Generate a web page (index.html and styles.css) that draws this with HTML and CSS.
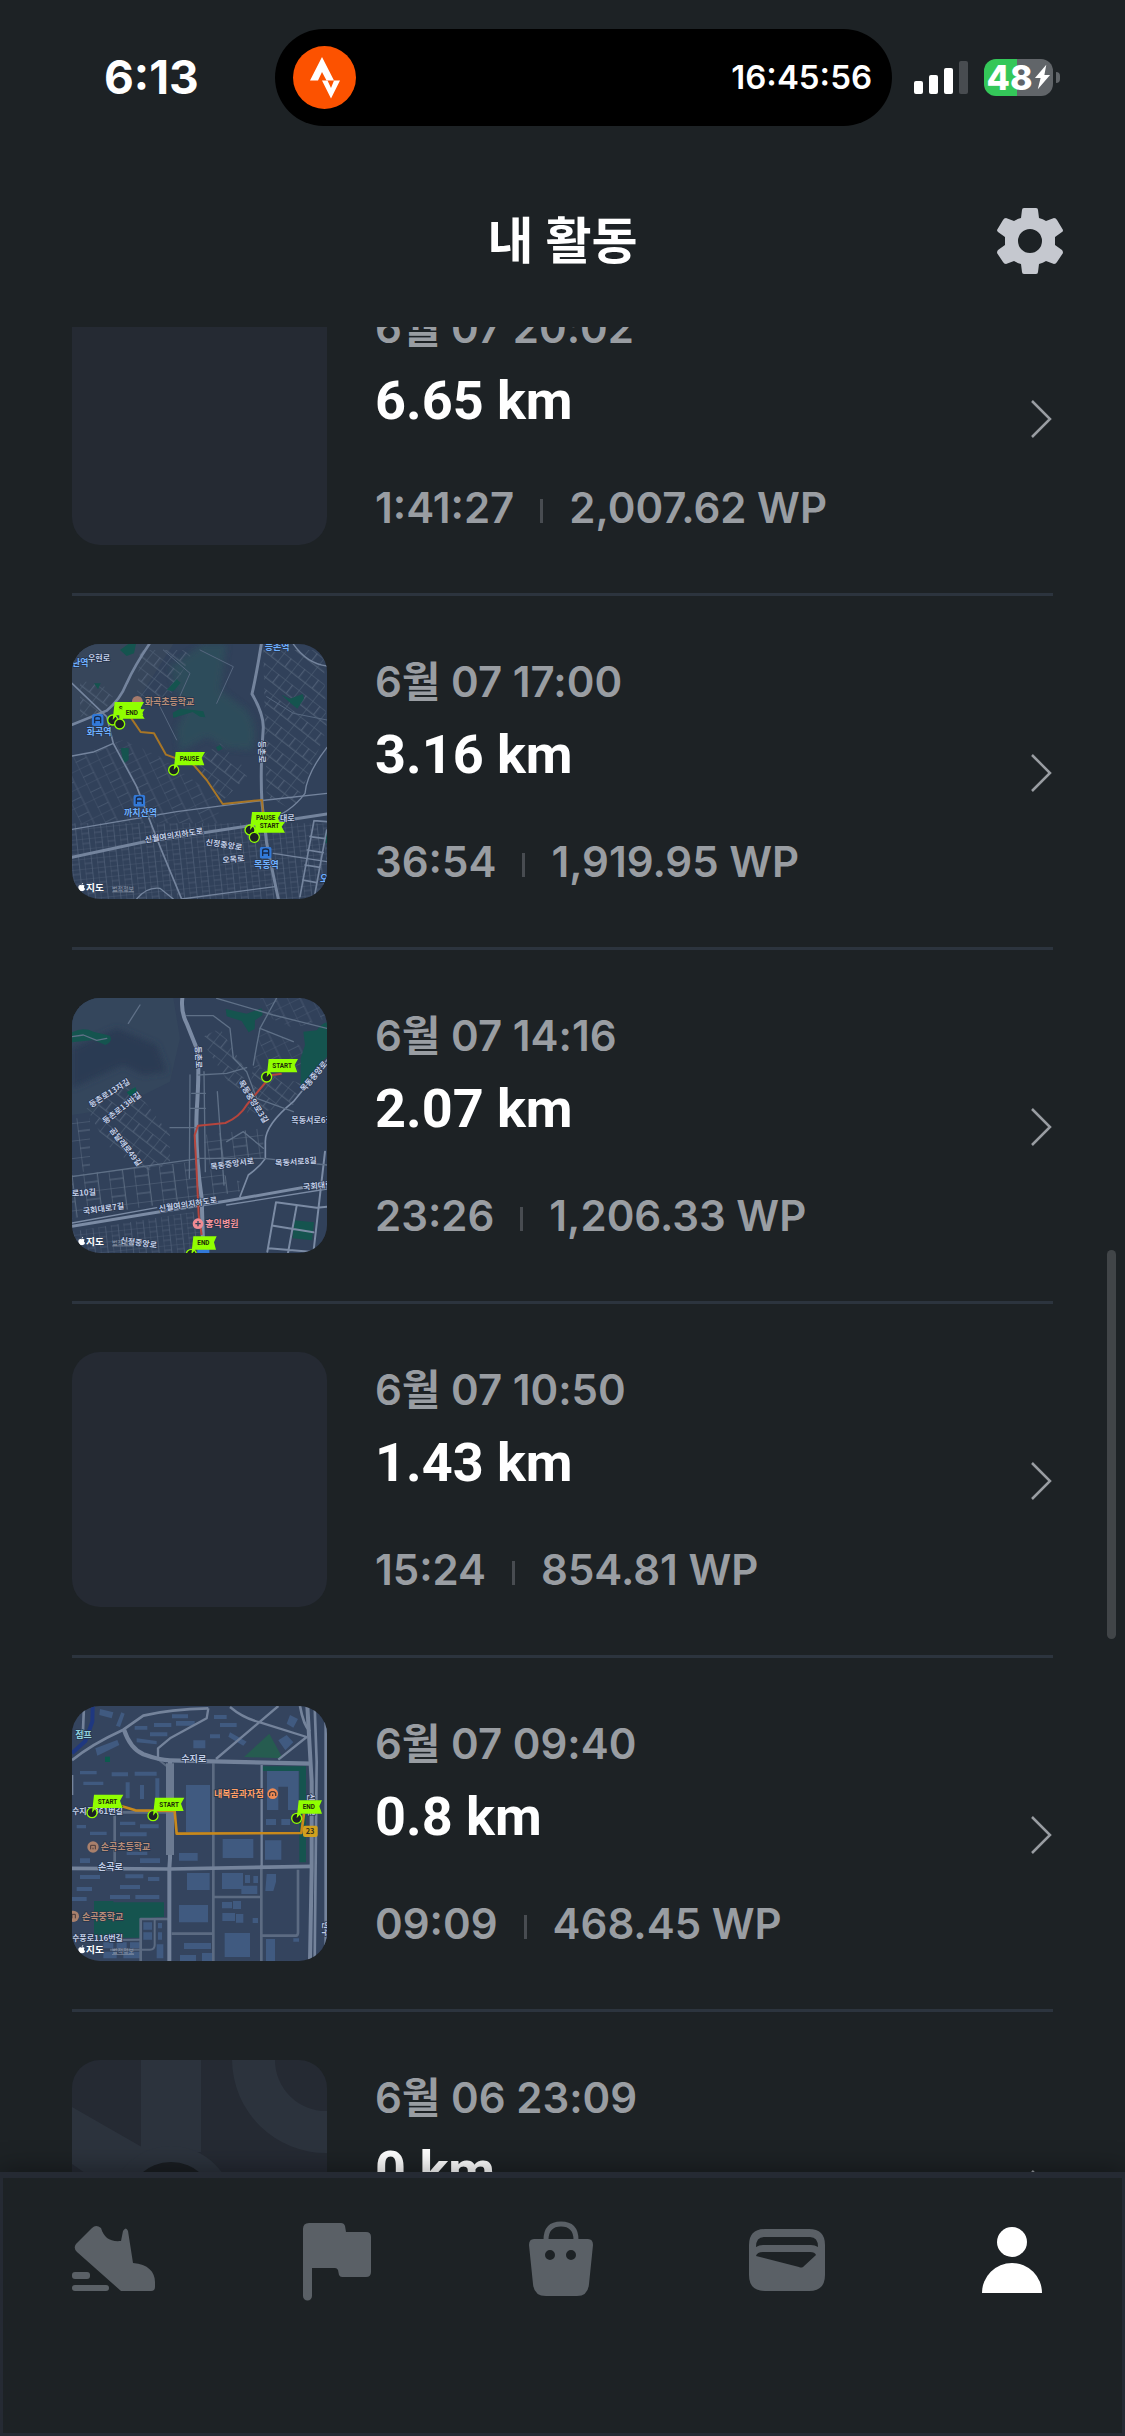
FILE: index.html
```html
<!DOCTYPE html>
<html lang="ko">
<head>
<title>내 활동</title>
<meta charset="utf-8"/>
<meta name="viewport" content="width=device-width, initial-scale=1">
<link rel="stylesheet" href="styles.css">
</head>
<body>

<!-- shared symbols -->
<svg class="defs" width="0" height="0" aria-hidden="true">
  <defs>
    <filter id="soft"><feGaussianBlur stdDeviation="10"/></filter>
    <pattern id="grid-a" width="38" height="30" patternUnits="userSpaceOnUse" patternTransform="rotate(-6)">
      <path d="M0 0H38M0 15H22M0 0V30M22 0V30" fill="none" stroke="#53637a" stroke-width="2"/>
    </pattern>
    <pattern id="grid-b" width="66" height="50" patternUnits="userSpaceOnUse" patternTransform="rotate(-26)">
      <path d="M0 0H66M0 28H36M0 0V50M36 0V50" fill="none" stroke="#4f6076" stroke-width="2"/>
    </pattern>
    <pattern id="grid-c" width="52" height="60" patternUnits="userSpaceOnUse" patternTransform="rotate(38)">
      <path d="M0 0H52M0 0V60M28 0V32M0 32H52" fill="none" stroke="#536379" stroke-width="3"/>
    </pattern>
    <pattern id="grid-d" width="76" height="52" patternUnits="userSpaceOnUse" patternTransform="rotate(-7)">
      <path d="M0 0H76M0 26H42M0 0V52M42 0V52" fill="none" stroke="#5c6c81" stroke-width="3"/>
    </pattern>
    <symbol id="pin" viewBox="-20 -60 120 80" overflow="visible">
      <circle r="15" fill="#1d2225" stroke="#90ff00" stroke-width="4"/>
      <path d="M0 0L6 -54H94L84 -36L92 -14H12Z" fill="#90ff00"/>
    </symbol>
    <symbol id="station" viewBox="0 0 36 36">
      <rect width="36" height="36" rx="8" fill="#3279d8"/>
      <path d="M9 28V12Q9 7 18 7T27 12V28M11 19H25" fill="none" stroke="#16294a" stroke-width="4"/>
    </symbol>
    <symbol id="apple" viewBox="0 0 22 26">
      <path d="M11 8C7 5 1 7 1 14C1 20 5 25 8 25C10 25 12 25 14 25C18 25 21 20 21 18C17 16 17 11 20 9C17 6 14 7 11 8ZM11 6Q11 1 16 0Q16 5 11 6Z" fill="#fff"/>
    </symbol>
    <symbol id="chevron" viewBox="0 0 22 40">
      <path d="M1 3L19 21L1 39" fill="none" stroke="#999da2" stroke-width="2.500"/>
    </symbol>
  </defs>
</svg>

<div class="app">
  <div class="status">
    <span class="clock">6:13</span>
    <div class="island">
      <svg class="strava" viewBox="0 0 63 63" role="img" aria-label="Strava">
        <circle cx="31.5" cy="31.5" r="31.5" fill="#fc5200"/>
        <path d="M29 11L41 34.500H33.500L29 26L25 34.500H17Z" fill="#fff"/>
        <path d="M29 34.500H34.500L38 42L41 34.500H47L38 52.500Z" fill="#fff"/>
      </svg>
      <span>16:45:56</span>
    </div>
    <div class="signal"><i></i><i></i><i></i><i></i></div>
    <div class="battery">
      <span>48</span>
      <svg viewBox="0 0 18 26"><path d="M13 0L1 14H7L4 26L17 11H11Z" fill="#fff"/></svg>
    </div>
  </div>

  <header class="header">
    <h1>내 활동</h1>
    <button class="settings" type="button" aria-label="설정">
      <svg viewBox="-33 -33 66 66">
        <path fill="#c5c8cf" fill-rule="evenodd" d="M-6 -33H6Q8 -33 8 -31L9 -23Q13 -22 16 -20L24 -23Q26 -23 27 -21L33 -11Q33 -9 32 -9L25 -4V4L32 9Q33 10 33 12L27 21Q26 23 24 23L16 20Q13 22 9 23L8 31Q8 33 6 33H-6Q-8 33 -8 31L-9 23Q-13 22 -16 20L-24 23Q-26 23 -27 21L-33 12Q-33 10 -32 9L-25 4V-4L-32 -9Q-33 -10 -33 -11L-27 -21Q-26 -23 -24 -23L-16 -20Q-13 -22 -9 -23L-8 -31Q-8 -33 -6 -33ZM0 -12A12 12 0 1 0 0 12A12 12 0 1 0 0 -12Z"/>
      </svg>
    </button>
  </header>

  <main class="scroller">
    <div class="list">
      <a class="row" href="#">
        <div class="thumb"></div>
        <div class="info">
          <div class="date">6월 07 20:02</div>
          <div class="distance">6.65 km</div>
          <div class="meta"><span>1:41:27</span><span>2,007.62 WP</span></div>
        </div>
        <svg class="chevron"><use href="#chevron"/></svg>
      </a>

      <a class="row" href="#">
        <svg class="thumb map" viewBox="36 42 765 765">
          <rect x="36" y="42" width="765" height="765" fill="#31415a"/>
          <path d="M36 42H340L240 200L36 280Z" fill="#37465b"/>
          <path d="M430 42H500L480 180L560 240Q600 300 575 360L500 355L440 320L360 365L350 300L380 230L350 190L330 110Z" fill="#2f4f5b" opacity=".8" filter="url(#soft)"/>
          <path d="M36 580H801V807H36Z" fill="url(#grid-a)"/>
          <path d="M36 380L190 330L300 380L470 500L480 580H36Z" fill="url(#grid-b)"/>
          <path d="M240 60L400 60L330 200L230 200ZM400 400L480 340L570 430L490 510ZM610 60H790L800 300L700 540L620 500ZM60 150L170 180L130 250L60 260Z" fill="url(#grid-c)"/>
          <g fill="#15544f">
            <path d="M180 60L205 42H228L222 70L200 78ZM320 180L350 148L362 158L340 184ZM338 248L360 236L400 240L430 244L436 262L420 260L398 246L340 264ZM664 194L690 206L728 192L732 206L712 236L692 220ZM182 354H206V390L190 402L186 376ZM468 352L480 345L488 356L474 363ZM102 160H122L114 178ZM796 606H801V640H796Z"/>
          </g>
          <g fill="none" stroke="#74849d" stroke-linecap="round">
            <path d="M268 42Q225 105 200 160Q180 210 140 242L36 284" stroke-width="8"/>
            <path d="M604 42Q590 130 576 192Q610 250 610 292Q600 420 606 520L620 640L655 807" stroke-width="9"/>
            <path d="M36 682L250 636L801 552" stroke-width="9"/>
            <path d="M36 160L140 260L160 340L230 470L300 650L365 807" stroke-width="5"/>
            <path d="M36 378L100 366L160 340M700 42Q740 100 801 108M801 352Q740 430 735 490Q690 550 620 570" stroke-width="4"/>
            <path d="M36 598L350 545L620 510L801 490M365 807L645 770M230 807Q260 770 300 775L340 807M640 670L801 695" stroke-width="4"/>
            <path d="M762 572L800 575M762 572L720 800M800 600L765 790M750 620L796 626M742 660L790 668M735 705L780 712M728 750L770 758" stroke-width="5"/>
            <path d="M310 60L390 130L350 220M420 60L520 110L470 220M620 200L700 250L801 270M300 230L350 330" stroke="#56677f" stroke-width="3"/>
          </g>
          <path d="M212 262L242 306L282 310L318 374L400 404L440 450L488 522L606 510L610 560" fill="none" stroke="#a87626" stroke-width="6" stroke-linejoin="round"/>
          <g class="label blue">
            <text x="36" y="108">난역</text><text x="614" y="60">등촌역</text>
            <text x="80" y="315">화곡역</text><text x="192" y="557">까치산역</text><text x="582" y="713">목동역</text><text x="780" y="755">오</text>
          </g>
          <g class="label">
            <text class="small" x="84" y="94">우현로</text>
            <text class="small" transform="translate(256 638) rotate(-9)">신월여의지하도로</text>
            <text class="small" transform="translate(436 644) rotate(9)">신정중앙로</text>
            <text class="small" transform="translate(488 700) rotate(-6)">오목로</text>
            <text class="small" x="660" y="572">대로</text>
            <text class="small" transform="translate(598 332) rotate(90)">등촌로</text>
          </g>
          <circle cx="232" cy="214" r="16" fill="#a57a6b"/>
          <text class="label brown" x="254" y="224">화곡초등학교</text>
          <use href="#station" x="95" y="252" width="36" height="36"/>
          <use href="#station" x="220" y="494" width="36" height="36"/>
          <use href="#station" x="599" y="650" width="36" height="36"/>
          <g class="pins">
            <g transform="translate(158 270)"><use href="#pin" x="-20" y="-60" width="120" height="80"/><text x="18" y="-26">S</text></g>
            <g transform="translate(179 282)"><path d="M0 0L-2 -44H75L66 -30L75 -16H10Z" fill="#90ff00"/><circle r="15" fill="#1d2225" stroke="#90ff00" stroke-width="4"/><text x="18" y="-26">END</text></g>
            <g transform="translate(341 420)"><use href="#pin" x="-20" y="-60" width="120" height="80"/><text x="18" y="-27">PAUSE</text></g>
            <g transform="translate(570 600)"><use href="#pin" x="-20" y="-60" width="120" height="80"/><text x="18" y="-30">PAUSE</text></g>
            <g transform="translate(583 622)"><path d="M0 0L4 -46H92L82 -32L92 -14H12Z" fill="#90ff00"/><circle r="15" fill="#1d2225" stroke="#90ff00" stroke-width="4"/><text x="16" y="-27">START</text></g>
          </g>
          <use href="#apple" x="54" y="758" width="22" height="26"/>
          <text class="brand" x="78" y="783">지도</text><text class="legal" x="156" y="782">법적정보</text>
        </svg>
        <div class="info">
          <div class="date">6월 07 17:00</div>
          <div class="distance">3.16 km</div>
          <div class="meta"><span>36:54</span><span>1,919.95 WP</span></div>
        </div>
        <svg class="chevron"><use href="#chevron"/></svg>
      </a>

      <a class="row" href="#">
        <svg class="thumb map" viewBox="36 39 765 765">
          <rect x="36" y="39" width="765" height="765" fill="#31415a"/>
          <path d="M36 39H340L360 160L330 290L250 330L170 310L100 380L36 390Z" fill="#34465c"/>
          <path d="M36 190L170 130L290 180L320 260L250 270L190 240L36 310Z" fill="#2b3b53" filter="url(#soft)"/>
          <path d="M80 370L210 290L330 450V540L250 560L140 480ZM480 130L560 260L530 330L420 160ZM580 240L730 300L700 360L560 390Z" fill="url(#grid-c)"/>
          <path d="M36 570L400 530L540 590L540 620L36 700Z" fill="url(#grid-d)"/>
          <path d="M36 740L400 680L440 804H36Z" fill="url(#grid-a)"/>
          <path d="M600 130L740 190V260L580 250ZM600 39H801V100L700 130L610 90Z" fill="url(#grid-b)"/>
          <path d="M36 400L90 400V560H36ZM430 450L610 430V520L440 540Z" fill="url(#grid-d)"/>
          <g fill="#15544f">
            <path d="M36 142Q70 125 100 140L150 152Q160 170 136 180L100 165L36 172ZM497 72L560 86L605 70L608 90L585 106L584 132L566 142L545 108L500 94ZM730 140L770 136Q785 115 801 112V215L770 250L745 290L722 300V220L735 180ZM702 706L762 712L756 766L698 760Z"/>
            <path d="M200 322L226 306L232 322L212 336Z" fill="#0c5b4e"/>
          </g>
          <g fill="none" stroke="#7b8ba4" stroke-linecap="round" stroke-linejoin="round">
            <path d="M367 39Q362 80 380 115L410 190Q420 230 410 380Q405 500 425 640L430 804" stroke-width="12"/>
            <path d="M36 724L300 680L500 648L801 595" stroke-width="9"/>
            <path d="M36 714L290 668M500 660L801 612" stroke-width="4"/>
            <path d="M801 225L700 350Q615 420 616 470V520Q600 545 565 570L540 635" stroke-width="5"/>
            <path d="M648 652L770 668L801 665M648 652L622 800M710 662L684 804M795 500L760 804M640 722L760 742M626 790L750 800" stroke-width="6"/>
            <g stroke="#5f7087" stroke-width="4">
              <path d="M380 92H460L510 130L520 220L560 260L590 340L700 380M240 60L205 115M415 270L500 265L560 248M390 270L388 580M432 260L436 560M330 428H410M472 320L492 600M395 325H436M390 370H436M600 130Q590 180 580 240M470 40L640 90L801 130M36 575L420 520L610 520L801 540"/>
              <path d="M650 39L600 130L700 170M500 470L550 440L610 490M36 155L70 150L110 166L140 160"/>
            </g>
          </g>
          <path d="M425 750L416 690L410 560L404 450L414 422L496 414Q540 395 560 360L600 312L636 270L665 266" fill="none" stroke="#b5453d" stroke-width="6" stroke-linejoin="round"/>
          <g class="label">
            <text class="small" transform="translate(406 184) rotate(88)">등촌로</text>
            <text class="small" transform="translate(94 368) rotate(-32)">등촌로13자길</text>
            <text class="small" transform="translate(136 418) rotate(-38)">등촌로13바길</text>
            <text class="small" transform="translate(148 436) rotate(52)">곰달래로49길</text>
            <text class="small" transform="translate(534 292) rotate(58)">목동중앙로3길</text>
            <text class="small" transform="translate(732 322) rotate(-50)">목동중앙로</text>
            <text class="small" x="694" y="414">목동서로6길</text>
            <text class="small" transform="translate(452 554) rotate(-8)">목동중앙서로</text>
            <text class="small" transform="translate(646 543) rotate(-4)">목동서로8길</text>
            <text class="small" transform="translate(730 615) rotate(-6)">국회대로</text>
            <text class="small" transform="translate(36 634) rotate(-4)">로10길</text>
            <text class="small" transform="translate(70 688) rotate(-8)">국회대로7길</text>
            <text class="small" transform="translate(298 680) rotate(-9)">신월여의지하도로</text>
            <text class="small" transform="translate(180 774) rotate(8)">신정중앙로</text>
          </g>
          <circle cx="414" cy="716" r="16" fill="#f08a93"/><path d="M406 716H422M414 708V724" stroke="#31415a" stroke-width="4"/>
          <text class="label pink" x="436" y="726">홍익병원</text>
          <rect x="412" y="780" width="36" height="36" fill="#3279d8"/>
          <g class="pins">
            <g transform="translate(620 276)"><use href="#pin" x="-20" y="-60" width="120" height="80"/><text x="17" y="-27">START</text></g>
            <g transform="translate(394 808)"><circle r="15" fill="#1d2225" stroke="#90ff00" stroke-width="4"/><path d="M0 0L6 -54H76L68 -36L74 -14H12Z" fill="#90ff00"/><text x="18" y="-28">END</text></g>
          </g>
          <use href="#apple" x="54" y="755" width="22" height="26"/>
          <text class="brand" x="78" y="780">지도</text><text class="legal" x="156" y="779">법적정보</text>
        </svg>
        <div class="info">
          <div class="date">6월 07 14:16</div>
          <div class="distance">2.07 km</div>
          <div class="meta"><span>23:26</span><span>1,206.33 WP</span></div>
        </div>
        <svg class="chevron"><use href="#chevron"/></svg>
      </a>

      <a class="row" href="#">
        <div class="thumb"></div>
        <div class="info">
          <div class="date">6월 07 10:50</div>
          <div class="distance">1.43 km</div>
          <div class="meta"><span>15:24</span><span>854.81 WP</span></div>
        </div>
        <svg class="chevron"><use href="#chevron"/></svg>
      </a>

      <a class="row" href="#">
        <svg class="thumb map" viewBox="36 33 765 765">
          <rect x="36" y="33" width="765" height="765" fill="#34445e"/>
          <g fill="#15544f">
            <path d="M102 618H160V622H312V666Q280 665 240 676V728H102ZM606 214H738V502H718V228H606Z"/>
            <path d="M552 186L628 116L668 190Z" fill="#265c50"/>
            <rect x="135" y="185" width="15" height="16" fill="#0c5b4e"/>
          </g>
          <path d="M98 33L97 80L76 138L36 175" fill="none" stroke="#1f3880" stroke-width="12"/>
          <!-- buildings -->
          <g fill="#405a80">
            <path d="M378 270H450V412H378ZM621 228H716V345H684V275H655V345H621ZM488 432H580V489H488ZM615 436H664V494H615ZM357 474H413V497H357ZM381 534H449V585H381ZM486 534H549V582H486ZM357 630H444V682H357ZM494 714H570V786H494ZM372 744H453V762H372ZM618 732H645V798H618ZM360 780H408V798H360ZM426 774H460V798H426Z"/>
            <path d="M555 540H570V564H555ZM580 543H594V564H580ZM544 572H592V597H544ZM620 537H648V560L640 588H616ZM486 621H516V640H486ZM519 618H543V642H519ZM487 654H525V678H487ZM528 657H550V683H528ZM578 669H594V684H578ZM618 372H648V390H618ZM664 372H690V390H664ZM700 730H717V740H700Z"/>
            <path d="M106 160L172 135L178 150L112 182ZM120 42L160 52L155 70L118 60ZM184 52L194 56L180 96L168 92ZM224 93H262V104H224ZM282 84H334V96H282ZM270 112H322V124H270ZM348 78H404V92H348ZM336 58H384V70H336ZM230 130L290 138V148L230 142ZM400 136H436V160H400ZM462 60H500V72H462ZM480 84H530V96H480ZM450 118H480V130H450ZM510 112L560 140L550 152L505 125ZM655 136L680 120L700 142L676 166ZM690 60L714 72L700 98L680 86Z"/>
            <path d="M60 228H110V238H60ZM70 260H130V270H70ZM155 232H204V244H155ZM224 230H290V242H224ZM197 262H209V310H197ZM286 250H298V320H286ZM240 270H252V312H240ZM50 390H78V400H50ZM90 410H140V420H90ZM180 380H226V390H180ZM240 388H296V400H240ZM180 412H260V424H180ZM200 470H262V480H200ZM240 490H300V504H240ZM60 490H90V504H60ZM196 538H250V550H196ZM264 546H298V558H264ZM60 540H120V552H60ZM50 576H96V588H50ZM180 570H240V582H180ZM150 600H210V612H150ZM226 600H298V612H226ZM36 606H80V618H36Z"/>
            <path d="M250 682H276V704H250ZM250 712H276V734H250ZM294 684H306V700H294ZM294 712H306V734H294ZM130 742H160V760H130ZM170 742H200V760H170ZM210 742H240V760H210ZM130 770H170V790H130ZM190 770H240V790H190ZM290 748H310V790H290Z"/>
          </g>
          <g fill="none" stroke="#5c6b82" stroke-linejoin="round">
            <path d="M460 205V798M462 606H604M604 510V798M335 716H460M604 722H708Q714 722 714 712V524M242 798V672H326M164 350V510M150 352H320" stroke-width="8"/>
            <path d="M328 220L290 190M284 672V750Q284 764 270 764H150M180 735L240 734" stroke-width="6"/>
          </g>
          <g fill="none" stroke="#74839b" stroke-linejoin="round">
            <path d="M36 196Q90 150 190 104L250 62Q330 42 445 40M36 240V300M72 33L68 130" stroke-width="8"/>
            <path d="M192 104Q210 160 250 178Q300 196 330 196L756 206" stroke-width="13"/>
            <path d="M445 40L440 70L330 130L294 160V196M468 192L655 33M510 36Q550 70 600 82L740 126L655 194M605 210V514" stroke-width="7"/>
            <path d="M330 196V490L328 520V798" stroke-width="12"/>
            <path d="M330 205V480" stroke-width="24" stroke="#6b7a91"/>
            <path d="M36 520L330 522L756 514" stroke-width="11"/>
            <path d="M742 33L755 260V520L750 798" stroke-width="12"/>
            <path d="M764 33L770 200L764 798M720 33Q730 90 750 110M797 80V798" stroke-width="8"/>
          </g>
          <path d="M186 334L226 346L344 348L350 416L724 414L732 356" fill="none" stroke="#c8891c" stroke-width="8" stroke-linejoin="round"/>
          <g class="label">
            <text x="46" y="128" fill="#8fd0dc">점프</text>
            <text x="364" y="202">수지로</text>
            <text class="small" x="36" y="357">수지로361번길</text>
            <text x="114" y="526">손곡로</text>
            <text class="small" x="36" y="738">수풍로116번길</text>
            <text class="small" transform="translate(744 296) rotate(90)">신수로</text>
            <text class="small" transform="translate(788 680) rotate(90)">만수</text>
          </g>
          <g class="label brown">
            <text x="122" y="466">손곡초등학교</text><text x="66" y="674">손곡중학교</text>
          </g>
          <text class="label orange" x="462" y="306">내복곰과자점</text>
          <circle cx="638" cy="296" r="16" fill="#ee8a53"/><path d="M629 303V294L634 290H642L647 294V303M638 298V303" fill="none" stroke="#4a3a3a" stroke-width="4"/>
          <circle cx="99" cy="456" r="17" fill="#a9806c"/><path d="M92 463V451H106V463M99 458V463" fill="none" stroke="#4a3a3a" stroke-width="3"/>
          <circle cx="40" cy="664" r="17" fill="#a9806c"/><path d="M36 670V658H46V670" fill="none" stroke="#4a3a3a" stroke-width="3"/>
          <rect x="729" y="392" width="44" height="34" rx="6" fill="#d0a01e"/><text class="shield" x="737" y="417">23</text>
          <g class="pins">
            <g transform="translate(96 353)"><use href="#pin" x="-20" y="-60" width="120" height="80"/><text x="17" y="-27">START</text></g>
            <g transform="translate(279 362)"><use href="#pin" x="-20" y="-60" width="120" height="80"/><text x="19" y="-27">START</text></g>
            <g transform="translate(710 370)"><circle r="15" fill="#1d2225" stroke="#90ff00" stroke-width="4"/><path d="M0 0L6 -54H76L68 -36L76 -14H12Z" fill="#90ff00"/><text x="18" y="-28">END</text></g>
          </g>
          <use href="#apple" x="54" y="750" width="22" height="26"/>
          <text class="brand" x="78" y="774">지도</text><text class="legal" x="156" y="774">법적정보</text>
        </svg>
        <div class="info">
          <div class="date">6월 07 09:40</div>
          <div class="distance">0.8 km</div>
          <div class="meta"><span>09:09</span><span>468.45 WP</span></div>
        </div>
        <svg class="chevron"><use href="#chevron"/></svg>
      </a>

      <a class="row" href="#">
        <svg class="thumb" viewBox="0 0 255 255">
          <g fill="#2c333d">
            <path d="M69 0H129V92H69ZM0 47L110 110V180L0 104Z"/>
            <path d="M160 0A94 94 0 0 0 255 93V51A51 51 0 0 1 203 0Z"/>
          </g>
          <circle cx="99" cy="148" r="62" fill="#2c333d"/>
          <circle cx="99" cy="146" r="44" fill="#1a1e22"/>
        </svg>
        <div class="info">
          <div class="date">6월 06 23:09</div>
          <div class="distance">0 km</div>
          <div class="meta"><span>00:00</span><span>0 WP</span></div>
        </div>
        <svg class="chevron"><use href="#chevron"/></svg>
      </a>
    </div>
    <div class="scrollbar"></div>
  </main>

  <nav class="tabs">
    <a href="#" aria-label="걷기">
      <svg viewBox="0 0 90 84">
        <path d="M6 26L22 10Q26 6 31 10C34 20 40 24 51 23L53 13Q56 8 58 13L63 45C78 46 85 54 85 64V69Q85 73 81 73H51L7 34Q3 30 6 26Z"/>
        <rect x="2" y="54" width="18" height="7" rx="3"/><rect x="2" y="67" width="37" height="6" rx="3"/>
      </svg>
    </a>
    <a href="#" aria-label="챌린지">
      <svg viewBox="0 0 90 84"><path d="M9 11Q9 5 15 5H47Q50 5 51 8L52 14H72Q77 14 77 19V54Q77 59 72 59H48Q46 59 45 57L44 52Q43 50 41 50H18V78A4 4 0 0 1 9 78Z"/></svg>
    </a>
    <a href="#" aria-label="상점">
      <svg viewBox="0 0 90 84">
        <path d="M29 22Q29 6 44 6T59 22" fill="none" stroke="currentColor" stroke-width="5"/>
        <path fill-rule="evenodd" d="M17 21H71Q76 21 76 27L72 66Q71 78 60 78H29Q17 78 16 66L12 27Q12 21 17 21ZM33 32A5 5 0 1 0 33 42A5 5 0 1 0 33 32ZM54 32A5 5 0 1 0 54 42A5 5 0 1 0 54 32Z"/>
      </svg>
    </a>
    <a href="#" aria-label="지갑">
      <svg viewBox="0 0 90 84">
        <path fill-rule="evenodd" d="M24 11H68Q84 11 84 27V57Q84 73 68 73H24Q8 73 8 57V27Q8 11 24 11ZM15 29Q18 27 22 27H70Q74 27 77 29Q77 19 69 19H23Q15 19 15 29ZM15 38Q16 34 22 34H69Q74 34 75 37L62 49Q60 50 58 49Z"/>
      </svg>
    </a>
    <a class="active" href="#" aria-label="내 활동">
      <svg viewBox="0 0 90 84"><circle cx="47" cy="24" r="15"/><path d="M17 75A30 30 0 0 1 77 75Z"/></svg>
    </a>
  </nav>
</div>

</body>
</html>
```

FILE: styles.css
```css
* { box-sizing:border-box; }
body {
  margin:0;
  background:#1d2225;
  color:#fff;
  font-family:Inter, "Noto Sans CJK KR", sans-serif;
}
a { color:inherit; text-decoration:none; }
svg { display:block; flex:none; }
.defs { position:absolute; }
.app { display:flex; flex-direction:column; height:100vh; overflow:hidden; }

/* status bar */
.status { display:flex; align-items:center; height:154px; padding:0 72px 0 104px; }
.clock { flex:0 0 171px; font-size:46px; font-weight:700; }
.island {
  display:flex;
  flex:1;
  align-items:center;
  justify-content:space-between;
  height:97px;
  padding:0 20px 0 18px;
  border-radius:49px;
  background:#000;
  font-size:33px;
  font-weight:600;
}
.strava { width:63px; height:63px; }
.signal { display:flex; align-items:flex-end; gap:6px; height:33px; margin-left:22px; }
.signal i { width:9px; height:13px; border-radius:2px; background:#fff; }
.signal i:nth-child(2) { height:19px; }
.signal i:nth-child(3) { height:26px; }
.signal i:nth-child(4) { height:33px; background:#484c50; }
.battery {
  position:relative;
  display:flex;
  align-items:center;
  justify-content:center;
  gap:1px;
  width:69px;
  height:37px;
  margin-left:16px;
  border-radius:12px;
  background:linear-gradient(90deg, #34c759 48%, #616569 48%);
  font-size:34px;
  font-weight:800;
  line-height:37px;
}
.battery svg { width:17px; height:26px; }
.battery:after {
  content:"";
  position:absolute;
  right:-7px;
  top:13px;
  width:4px;
  height:11px;
  border-radius:0 4px 4px 0;
  background:#616569;
}

/* title bar */
.header { display:grid; grid-template-columns:1fr auto 1fr; align-items:center; height:173px; padding:0 62px; }
.header h1 { grid-column:2; margin:0; font-size:50px; font-weight:700; line-height:60px; }
.settings { justify-self:end; padding:0; border:0; background:none; cursor:pointer; }
.settings svg { width:66px; height:66px; }

/* activity list */
.scroller { position:relative; flex:1; min-height:0; overflow:hidden; }
.list { margin-top:-85px; padding:0 72px; }
.row {
  display:flex;
  align-items:center;
  gap:48px;
  padding:48px 0;
  border-bottom:3px solid #2c343e;
}
.thumb { flex:none; width:255px; height:255px; border-radius:28px; background:#252a33; }
.info { flex:1; }
.date, .meta { color:#999da2; font-size:42px; font-weight:600; line-height:54px; }
.distance {
  margin:14px 0 48px;
  font-family:Roboto, "Noto Sans CJK KR", sans-serif;
  font-size:54px;
  font-weight:700;
  line-height:64px;
}
.meta { display:flex; align-items:center; }
.meta span + span:before {
  content:"";
  display:inline-block;
  width:3px;
  height:24px;
  margin:0 26px;
  background:#484c51;
}
.chevron { width:22px; height:40px; }
.scrollbar {
  position:absolute;
  right:9px;
  top:50%;
  width:9px;
  height:389px;
  border-radius:5px;
  background:#414548;
}

/* map thumbnails */
.map text { font-family:"Noto Sans CJK KR", sans-serif; }
.label { fill:#c3cfe8; font-size:27px; font-weight:700; paint-order:stroke; stroke:#26344a; stroke-width:4px; }
.label .small { font-size:24px; }
.blue { fill:#6fb0ff; }
.brown { fill:#b98d78; }
.pink { fill:#f5949c; }
.orange { fill:#ff9f66; }
.brand { fill:#fff; font-size:29px; font-weight:700; }
.legal { fill:#8c97a9; font-size:18px; text-decoration:underline; }
.shield { fill:#33301c; font-size:22px; font-weight:700; }
.map .pins text { fill:#1d2b08; font-family:Roboto, sans-serif; font-size:19px; font-weight:700; }

/* bottom tabs */
.tabs {
  position:relative;
  display:flex;
  height:264px;
  padding-top:40px;
  border:3px solid #252a33;
  border-top-width:6px;
  background:#1d2225;
  box-shadow:0 -3px 24px rgba(0,0,0,.35);
}
.tabs a { display:flex; flex:1; justify-content:center; height:84px; color:#5a6066; }
.tabs svg { width:90px; height:84px; fill:currentColor; }
.tabs .active { color:#fff; }
```
